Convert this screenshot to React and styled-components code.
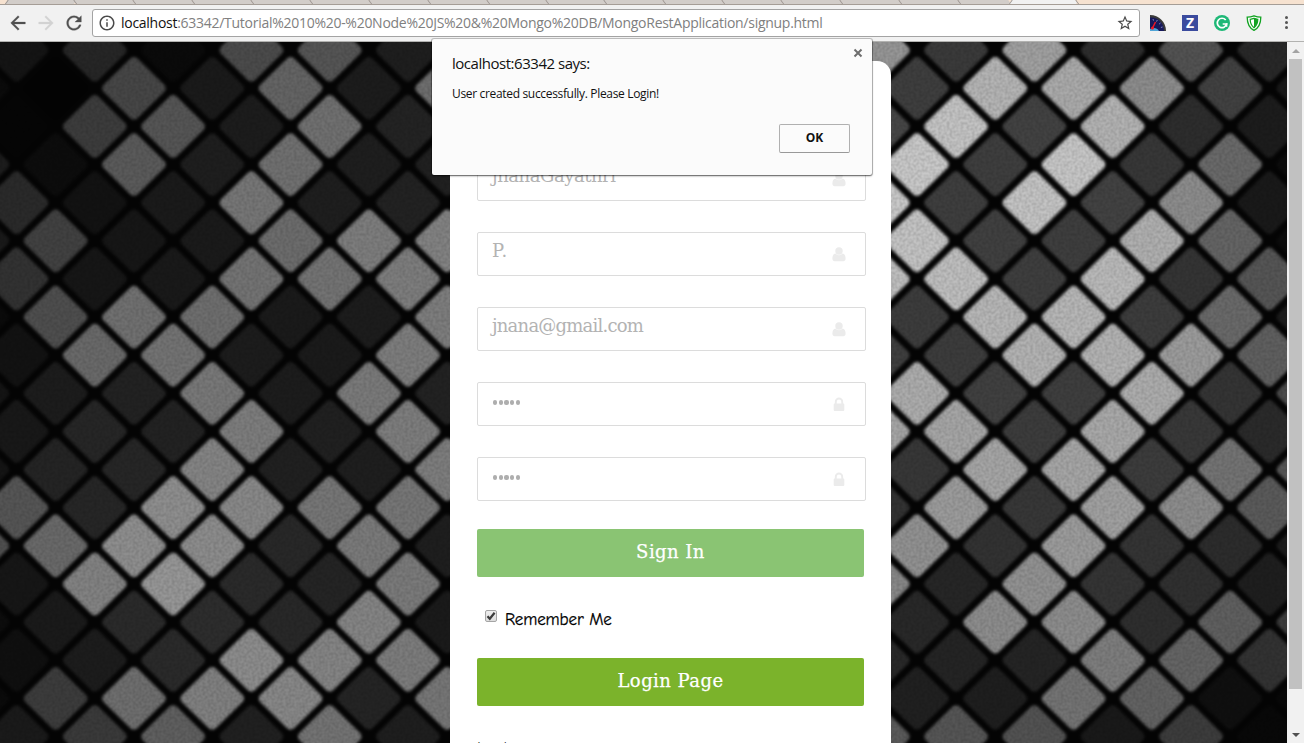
import React from "react";
import styled, { createGlobalStyle } from "styled-components";
import {
  MdArrowBack,
  MdArrowForward,
  MdRefresh,
  MdInfoOutline,
  MdStarBorder,
} from "react-icons/md";

const GlobalStyle = createGlobalStyle`
  * { box-sizing: border-box; }
  body { margin: 0; overflow: hidden; }
`;

const ui = `"Open Sans", "Noto Sans", sans-serif`;
const slab = `"DejaVu Serif", serif`;
const comic = `"Comic Sans MS", "Comic Neue", Lato, sans-serif`;

const Browser = styled.div`
  position: relative;
  display: flex;
  flex-direction: column;
  width: 1304px;
  height: 743px;
  overflow: hidden;
  background: #000;
  font-family: ${ui};
`;

const TabStrip = styled.div`
  display: flex;
  flex: none;
  height: 5px;
  overflow: hidden;
  background: #f6e2d0;
  border-bottom: 1px solid #a59d96;
`;

const tabColors = { idle: "#d2cdc9", active: "#f1f1f1", peach: "#f6e2d0" };

const Tab = styled.div`
  flex: none;
  width: ${(p) => p.$width || 58.95}px;
  height: 5px;
  background: ${(p) => tabColors[p.$kind || "idle"]};
  border-left: 1px solid #99938e;
  transform: skewX(${(p) => (p.$lean === "right" ? -35 : 35)}deg);
`;

const TabSpacer = styled.div`
  flex: none;
  width: 6px;
`;

const Toolbar = styled.div`
  display: flex;
  flex: none;
  align-items: center;
  height: 37px;
  padding: 0 10px 0 7px;
  background: #f1f1f1;
  border-bottom: 1px solid #b2b2b0;
`;

const NavButton = styled.span`
  display: flex;
  width: 28px;
  margin-top: -1px;
  font-size: 22px;
  color: ${(p) => (p.$disabled ? "#d2d2d2" : "#505050")};
  svg { stroke: currentColor; stroke-width: 0.3px; }
  svg path[fill="none"] { stroke: none; }
`;

const AddressBar = styled.div`
  display: flex;
  align-items: center;
  width: 1048px;
  height: 28px;
  margin: 0 10px 1px 1px;
  padding: 0 5px 0 5px;
  background: #fff;
  border: 1px solid #a3a3a3;
  border-radius: 3px;
  color: #4a4a4a;
  font-size: 18px;
`;

const Url = styled.span`
  flex: 1;
  margin-left: 5px;
  font-size: 14px;
  letter-spacing: -0.275px;
  white-space: nowrap;
  color: #808080;
  b { font-weight: 400; color: #111; }
`;

const Extensions = styled.div`
  display: flex;
  align-items: center;
  gap: 16px;
  margin-bottom: 1px;
`;

const ZBadge = styled.span`
  width: 16px;
  height: 16px;
  background: #3b4b9e;
  color: #fff;
  font: 700 14px/16px "Open Sans", sans-serif;
  text-align: center;
`;

const MenuDots = styled.span`
  display: flex;
  flex-direction: column;
  gap: 2px;
  margin-left: 7px;
  i { width: 3px; height: 3px; border-radius: 50%; background: #555; }
`;

const Viewport = styled.div`
  display: flex;
  flex: 1;
  min-height: 0;
`;

const Page = styled.main`
  position: relative;
  flex: 1;
  display: flex;
  padding: 19px 0 0 450px;
  overflow: hidden;
`;

const Wallpaper = styled.svg`
  position: absolute;
  inset: 0;
  width: 1287px;
  height: 701px;
`;

const Panel = styled.form`
  position: relative;
  display: flex;
  flex-direction: column;
  width: 441px;
  height: 720px;
  padding: 96px 25px 0 27px;
  background: #fff;
  border-radius: 14px 14px 0 0;
`;

const Field = styled.label`
  display: flex;
  flex: none;
  align-items: center;
  justify-content: space-between;
  height: 44px;
  margin-bottom: 31px;
  padding: 0 19px 0 14px;
  border: 1px solid #dcdcdc;
  border-radius: 2px;
  color: #ebebeb;
`;

const FieldText = styled.span`
  margin: -7px 0 0;
  font-family: ${slab};
  font-size: 18px;
  letter-spacing: ${(p) => p.$track}px;
  line-height: 24px;
  color: #b3b3b3;
`;

const Dots = styled.span`
  display: flex;
  gap: 1.5px;
  margin: -3px 0 0 1px;
  i { width: 4.2px; height: 4.2px; border-radius: 50%; background: #aeaeae; }
`;

const Action = styled.button`
  flex: none;
  width: 387px;
  height: 48px;
  margin-top: ${(p) => p.$offset || 0}px;
  padding: 0 0 3px;
  border: 0;
  border-radius: 2px;
  background: ${(p) => p.$color};
  color: #fff;
  font-family: ${slab};
  font-size: 18px;
  letter-spacing: 0.45px;
  -webkit-text-stroke: 0.25px #fff;
`;

const Remember = styled.label`
  display: flex;
  align-items: center;
  height: 24px;
  margin: 30px 0 27px 8px;
  gap: 8px;
  font-family: ${comic};
  font-size: 17px;
  letter-spacing: -0.1px;
  -webkit-text-stroke: 0.25px #000;
  color: #000;
`;

const CheckBox = styled.span`
  display: flex;
  width: 12px;
  height: 12px;
  margin-top: -6px;
  background: linear-gradient(#eee, #ddd);
  border: 1px solid #a5a5a5;
  border-radius: 2px;
`;

const LoginLabel = styled.span`
  margin-top: 31px;
  font-family: ${comic};
  font-size: 17px;
  line-height: 24px;
  color: #111;
`;

const ScrollTrack = styled.div`
  display: flex;
  flex-direction: column;
  align-items: center;
  width: 17px;
  background: #f1f1f1;
`;

const ScrollArrow = styled.span`
  width: 0;
  height: 0;
  margin: ${(p) => (p.$down ? "44px 0 0" : "7px 0 6px")};
  border: 4px solid transparent;
  border-top: ${(p) => (p.$down ? "4px solid #505050" : "0")};
  border-bottom: ${(p) => (p.$down ? "0" : "4px solid #a3a3a3")};
`;

const ScrollThumb = styled.div`
  width: 13px;
  height: 630px;
  background: #c1c1c1;
`;

const Dialog = styled.section`
  position: absolute;
  left: 432px;
  top: 39px;
  display: flex;
  flex-direction: column;
  width: 440px;
  height: 136px;
  padding: 13px 22px 22px 20px;
  background: #fbfbfb;
  border-radius: 2px;
  box-shadow: 0 0 0 1px rgba(0, 0, 0, 0.2), 0 1px 2px rgba(0, 0, 0, 0.55);
  color: #111;
`;

const DialogHead = styled.div`
  display: flex;
  justify-content: space-between;
  height: 22px;
  margin-right: -13px;
  font-size: 15px;
  line-height: 22px;
  letter-spacing: -0.47px;
  svg { margin-top: -4px; }
`;

const DialogText = styled.p`
  flex: 1;
  margin: 11px 0 0;
  font-size: 12px;
  line-height: 18px;
  letter-spacing: -0.33px;
`;

const OkButton = styled.button`
  align-self: flex-end;
  width: 71px;
  height: 29px;
  padding: 0 0 2px;
  background: #fbfbfb;
  border: 1px solid #b0b0b0;
  border-bottom-color: #999;
  border-radius: 2px;
  font: 700 12px ${ui};
  color: #111;
`;

// Brightness of every tile, one list per row, from the first visible column.
const LEFT = [
  [20, 38, 10, 75, 85, 30],
  [10, 3, 70, 26, 100, 28, 110],
  [5, 60, 85, 28, 112, 35],
  [28, 12, 90, 30, 112, 30, 32],
  [42, 18, 26, 118, 30, 34],
  [25, 65, 22, 26, 108, 125, 130],
  [50, 22, 25, 115, 115, 125],
  [10, 78, 112, 110, 26, 28, 125],
  [18, 105, 115, 28, 26, 125],
  [20, 28, 34, 120, 28, 122, 34],
  [24, 38, 34, 125, 32, 125],
  [20, 36, 38, 132, 32, 30, 125],
  [85, 38, 142, 136, 118, 118],
  [80, 105, 142, 140, 40, 122, 30],
  [22, 130, 150, 42, 36, 122],
  [12, 26, 42, 45, 40, 132, 26],
  [15, 28, 42, 140, 132, 124],
  [10, 60, 110, 128, 135, 36, 118],
  [26, 58, 95, 32, 115, 30],
];
const RIGHT = [
  [150, 58, 160, 45, 82, 40],
  [62, 180, 170, 140, 65, 25],
  [70, 195, 66, 178, 45, 28],
  [200, 62, 198, 55, 105, 12],
  [200, 62, 195, 66, 140, 25],
  [195, 64, 62, 175, 100, 12],
  [190, 190, 62, 185, 52, 85],
  [60, 182, 182, 60, 105, 28],
  [62, 60, 178, 178, 155, 95],
  [172, 64, 62, 172, 52, 75],
  [165, 165, 60, 168, 56, 42],
  [55, 165, 165, 60, 115, 85],
  [50, 155, 55, 160, 140, 90],
  [145, 50, 155, 52, 44, 28],
  [135, 38, 145, 52, 48, 30],
  [40, 140, 140, 46, 95, 60],
  [40, 36, 36, 125, 100, 50],
  [32, 30, 115, 98, 15, 8],
  [90, 85, 82, 25, 60, 8],
];

const tiles = [];
LEFT.forEach((row, r) =>
  row.forEach((g, k) => tiles.push({ c: (r % 2 ? -1 : 0) + 2 * k, r, g }))
);
RIGHT.forEach((row, r) =>
  row.forEach((g, k) => tiles.push({ c: (r % 2 ? 23 : 22) + 2 * k, r, g }))
);

function Mosaic() {
  return (
    <Wallpaper viewBox="0 0 1287 701">
      <defs>
        <filter
          id="tile"
          filterUnits="userSpaceOnUse"
          x="-20"
          y="-20"
          width="1330"
          height="745"
          colorInterpolationFilters="sRGB"
        >
          <feGaussianBlur in="SourceGraphic" stdDeviation="1.5" result="soft" />
          <feTurbulence type="fractalNoise" baseFrequency="0.36" numOctaves="1" seed="4" />
          <feColorMatrix values="0.26 0 0 0 0.82  0.26 0 0 0 0.82  0.26 0 0 0 0.82  0 0 0 0 1" result="grain" />
          <feBlend in="soft" in2="grain" mode="multiply" />
        </filter>
      </defs>
      <g filter="url(#tile)">
        <rect x="-40" y="-40" width="1370" height="785" fill="#040404" />
        {tiles.map(({ c, r, g }) => (
          <rect
            key={`${c}-${r}`}
            x="-24"
            y="-24"
            width="48"
            height="48"
            rx="5"
            fill={`rgb(${g},${g},${g})`}
            transform={`translate(${16.5 + 39.15 * c} ${8.2 + 38.13 * r}) scale(1 .985) rotate(45)`}
          />
        ))}
      </g>
    </Wallpaper>
  );
}

const UserIcon = () => (
  <svg width="14" height="15" viewBox="0 0 14 15" fill="currentColor">
    <circle cx="7" cy="4" r="3.7" />
    <path d="M3.6 6.6C1.2 7 .4 9 .4 11.8.4 13.300 1.300 14.200 2.700 14.200h8.600c1.400 0 2.300-.9 2.300-2.400 0-2.800-.8-4.800-3.200-5.200C9.500 7.700 8.300 8.300 7 8.300S4.500 7.700 3.600 6.600z" />
  </svg>
);

const LockIcon = () => (
  <svg width="14" height="15" viewBox="0 0 14 15">
    <path d="M3.800 7V4.700a3.200 3.200 0 0 1 6.400 0V7" fill="none" stroke="currentColor" strokeWidth="1.900" />
    <rect x="1.700" y="6.500" width="10.600" height="7.500" rx="0.900" fill="currentColor" />
  </svg>
);

const CloseIcon = () => (
  <svg width="10" height="10" viewBox="0 0 10 10">
    <path d="M1.500 1.500l7 7M8.500 1.500l-7 7" stroke="#6e6e6e" strokeWidth="2" />
  </svg>
);

const GaugeIcon = () => (
  <svg width="16" height="16" viewBox="0 0 16 16">
    <path d="M0 0C9 0 16 7 16 16H0z" fill="#3a3a3a" />
    <path d="M0 2.500C8 2 14 8 14 16H0z" fill="#17195c" />
    <path d="M0 16v-2c3-1.500 7-1.500 9 2z" fill="#4fa5d8" />
    <path d="M3 4l.5 1.600M7.300 5l-.8 1.600M10.500 8l-1.400 1.100M12.500 12l-1.600.5" stroke="#9da2d0" strokeWidth=".8" fill="none" />
    <path d="M5.500 7L2 14" stroke="#f01825" strokeWidth="1.500" />
    <circle cx="2.500" cy="13" r="1.500" fill="#f01825" />
  </svg>
);

const SwirlIcon = () => (
  <svg width="16" height="16" viewBox="0 0 16 16">
    <circle cx="8" cy="8" r="8" fill="#1fb877" />
    <path d="M11.700 5A4.700 4.700 0 1 0 12.600 9H8.700" fill="none" stroke="#fff" strokeWidth="1.700" />
    <path d="M12.600 8.200v3.600" stroke="#fff" strokeWidth="1.500" />
  </svg>
);

const ShieldIcon = () => (
  <svg width="16" height="16" viewBox="0 0 16 16">
    <path d="M1.200 2.200Q4.500 2 8 .8q3.500 1.200 6.800 1.400C14.800 8.500 12.500 13 8 15.400 3.500 13 1.200 8.500 1.200 2.200z" fill="#fff" stroke="#12a322" strokeWidth="1.300" />
    <path d="M4.200 4.300Q6 4.100 8 3.400q2 .7 3.800.9C11.800 8 10.600 10.800 8 12.700 5.400 10.800 4.200 8 4.200 4.300z" fill="#fff" stroke="#12a322" strokeWidth="1.200" />
    <path d="M8 3.400q2 .7 3.800.9C11.800 8 10.600 10.800 8 12.700z" fill="#12a322" />
  </svg>
);

const fields = [
  { text: "jnanaGayathri", track: -0.45 },
  { text: "P.", track: 1 },
  { text: "jnana@gmail.com", track: -0.78 },
  { secret: 5 },
  { secret: 5 },
];

export default function App() {
  return (
    <Browser>
      <GlobalStyle />
      <TabStrip>
        <TabSpacer />
        <Tab $lean="right" $width={69} />
        {Array.from({ length: 15 }, (_, i) => (
          <Tab key={i} />
        ))}
        <Tab $width={51} />
        <Tab $kind="active" $lean="right" $width={67} />
        <Tab $kind="peach" $width={260} />
      </TabStrip>
      <Toolbar>
        <NavButton><MdArrowBack /></NavButton>
        <NavButton $disabled><MdArrowForward /></NavButton>
        <NavButton><MdRefresh /></NavButton>
        <AddressBar>
          <MdInfoOutline />
          <Url>
            <b>localhost</b>
            :63342/Tutorial%2010%20-%20Node%20JS%20&%20Mongo%20DB/MongoRestApplication/signup.html
          </Url>
          <MdStarBorder />
        </AddressBar>
        <Extensions>
          <GaugeIcon />
          <ZBadge>Z</ZBadge>
          <SwirlIcon />
          <ShieldIcon />
          <MenuDots><i /><i /><i /></MenuDots>
        </Extensions>
      </Toolbar>
      <Viewport>
        <Page>
          <Mosaic />
          <Panel>
            {fields.map((f, i) => (
              <Field key={i}>
                {f.text ? (
                  <FieldText $track={f.track}>{f.text}</FieldText>
                ) : (
                  <Dots>{Array.from({ length: f.secret }, (_, d) => <i key={d} />)}</Dots>
                )}
                {f.text ? <UserIcon /> : <LockIcon />}
              </Field>
            ))}
            <Action type="button" $color="#8ac473" $offset={-3}>Sign In</Action>
            <Remember>
              <CheckBox>
                <svg width="10" height="10" viewBox="0 0 10 10">
                  <path d="M1.500 5.200l2.300 2.600L8.600 1.800" fill="none" stroke="#3c3c3c" strokeWidth="2.200" />
                </svg>
              </CheckBox>
              Remember Me
            </Remember>
            <Action type="button" $color="#7bb32b">Login Page</Action>
            <LoginLabel>Login</LoginLabel>
          </Panel>
        </Page>
        <ScrollTrack>
          <ScrollArrow />
          <ScrollThumb />
          <ScrollArrow $down />
        </ScrollTrack>
      </Viewport>
      <Dialog>
        <DialogHead>
          localhost:63342 says:
          <CloseIcon />
        </DialogHead>
        <DialogText>User created successfully. Please Login!</DialogText>
        <OkButton>OK</OkButton>
      </Dialog>
    </Browser>
  );
}
